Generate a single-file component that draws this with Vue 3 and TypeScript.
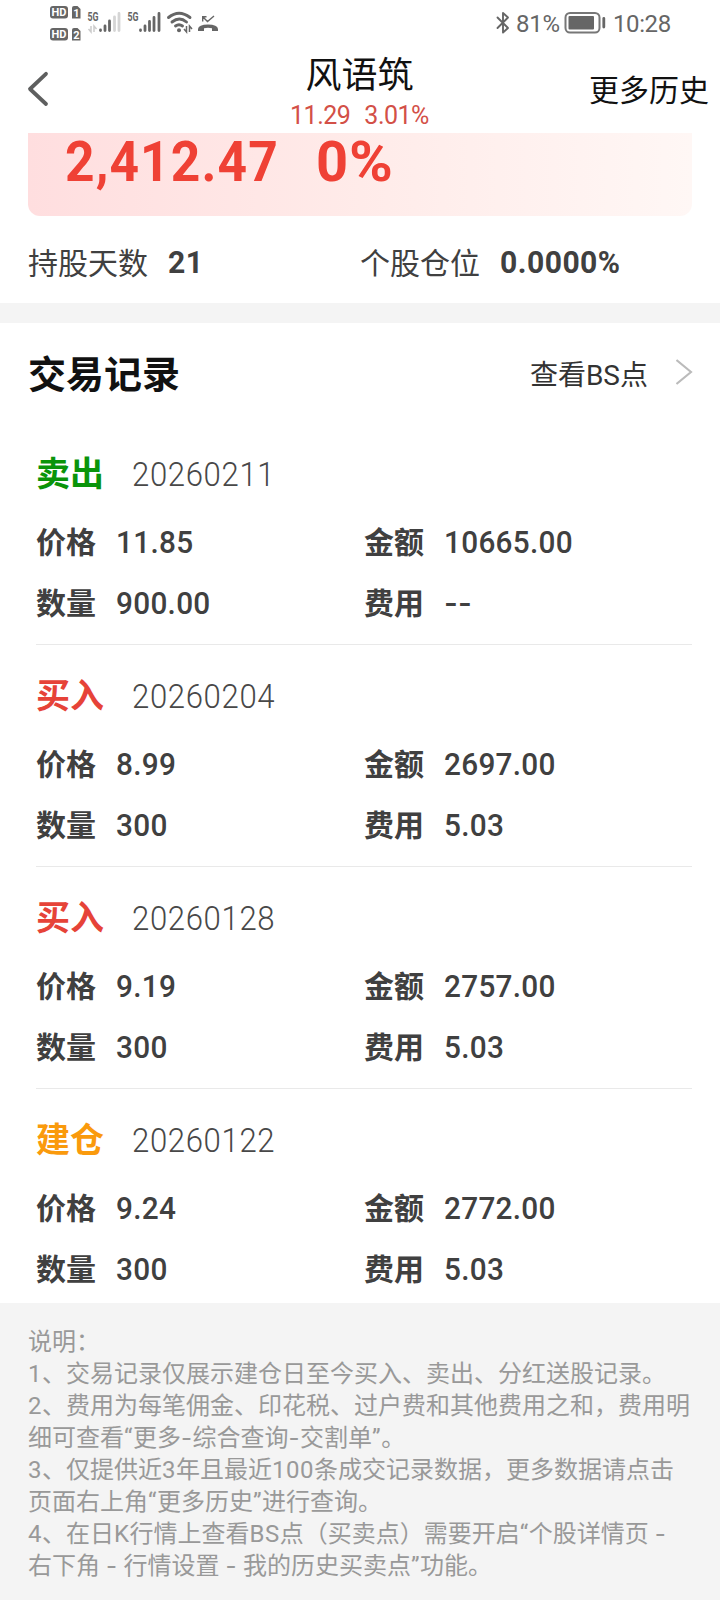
<script setup lang="ts">
interface TradeRecord {
  action: string
  kind: 'sell' | 'buy' | 'open'
  date: string
  price: string
  amount: string
  quantity: string
  fee: string
}

const records: TradeRecord[] = [
  { action: '卖出', kind: 'sell', date: '20260211', price: '11.85', amount: '10665.00', quantity: '900.00', fee: '--' },
  { action: '买入', kind: 'buy', date: '20260204', price: '8.99', amount: '2697.00', quantity: '300', fee: '5.03' },
  { action: '买入', kind: 'buy', date: '20260128', price: '9.19', amount: '2757.00', quantity: '300', fee: '5.03' },
  { action: '建仓', kind: 'open', date: '20260122', price: '9.24', amount: '2772.00', quantity: '300', fee: '5.03' },
]

const notes: string[] = [
  '说明：',
  '1、交易记录仅展示建仓日至今买入、卖出、分红送股记录。',
  '2、费用为每笔佣金、印花税、过户费和其他费用之和，费用明',
  '细可查看“更多-综合查询-交割单”。',
  '3、仅提供近3年且最近100条成交记录数据，更多数据请点击',
  '页面右上角“更多历史”进行查询。',
  '4、在日K行情上查看BS点（买卖点）需要开启“个股详情页 -',
  '右下角 - 行情设置 - 我的历史买卖点”功能。',
]

// Latin runs are tracked out slightly; hyphens are set in a wider face.
const splitRuns = (line: string): string[] => line.split(/(-|[A-Z0-9“”]+)/).filter((p) => p !== '')
const runClass = (part: string) => ({ dash: part === '-', latin: /^[A-Z0-9“”]+$/.test(part) })
</script>

<template>
  <div class="page">
    <div class="status">
      <svg class="status-left" width="190" height="48" viewBox="0 0 190 48">
        <g fill="#666">
          <rect x="10" y="6" width="18" height="12.500" rx="3" />
          <path d="M34 6h3.500l3 3v9.500H32V8a2 2 0 0 1 2-2z" />
          <rect x="10" y="28" width="18" height="12.500" rx="3" />
          <path d="M34 28h3.500l3 3v9.500H32V30a2 2 0 0 1 2-2z" />
        </g>
        <g class="hd" fill="#fff">
          <text x="11.500" y="16.300" textLength="15">HD</text>
          <text x="11.500" y="38.300" textLength="15">HD</text>
          <text x="33.300" y="16.600">1</text>
          <text x="33.300" y="38.600">2</text>
        </g>
        <g transform="translate(10 0)">
          <g class="gen" fill="#666">
            <text x="37.500" y="21" textLength="11" lengthAdjust="spacingAndGlyphs">5G</text>
            <text x="77.500" y="21" textLength="11" lengthAdjust="spacingAndGlyphs">5G</text>
          </g>
          <g stroke-width="2.800" stroke-linecap="round" stroke="#666">
            <path d="M50.500 30v.5M55 26v4.500M59.500 21v9.500M90.500 30v.5M95 26v4.500M99.500 21.500v9M104 17.500v13M109 13.500v17" />
            <path stroke="#d5d5d5" d="M64.500 17v13.500M69 13.500v17" />
          </g>
          <path d="M41 26v6l-2.500-3M44 32v-6l2.500 3" fill="none" stroke="#ccc" stroke-width="1.500" />
          <g fill="none" stroke="#666" stroke-width="2.900" stroke-linecap="round">
            <path d="M118.500 17.500q10.500-8.500 21.500 0M122 22q7.500-6 14.500 0" />
            <path d="M125.500 26q3.500-2.500 7 0" />
          </g>
          <circle cx="129" cy="30.200" r="2" fill="#666" />
          <path d="M136.500 26v6l-2.500-3M139.500 32v-6l2.500 3" fill="none" stroke="#666" stroke-width="1.500" />
        </g>
        <g transform="translate(19 0)">
          <path d="M143.700 16.500v5M143 16.700h4.500M144 17l4.500 4.500 6.500-5.500" fill="none" stroke="#666" stroke-width="1.400" />
          <path d="M149 24.500q9.500 0 10 4.500v2h-6v-2.700q-4-1-8 0v2.700h-6v-2q.5-4.500 10-4.500z" fill="#666" />
        </g>
      </svg>
      <div class="status-right">
        <svg width="15" height="24" viewBox="0 0 15 24" fill="none" stroke="#666" stroke-width="1.900" stroke-linejoin="round" stroke-linecap="round">
          <path d="M2.500 6.500l10.500 10.500-5 4.500V2l5 4.500L2.500 17" />
        </svg>
        <span class="battery-text">81%</span>
        <svg class="battery" width="42" height="22" viewBox="0 0 42 22">
          <rect x="1.500" y="1" width="34" height="19.500" rx="4.500" fill="none" stroke="#777" stroke-width="2" />
          <rect x="4.500" y="4" width="25.500" height="13.500" rx="1" fill="#666" />
          <path d="M39.800 6.500v8.500" stroke="#666" stroke-width="2.800" stroke-linecap="round" />
        </svg>
        <span class="clock">10:28</span>
      </div>
    </div>

    <header class="header">
      <div class="back">
        <svg width="22" height="36" viewBox="0 0 22 36" fill="none" stroke="#5e5f5f" stroke-width="3.800" stroke-linecap="round" stroke-linejoin="round">
          <path d="M19 2.800L3 18l16 15" />
        </svg>
      </div>
      <div class="stock">
        <div class="stock-name">风语筑</div>
        <div class="stock-quote"><span>11.29</span><span>3.01%</span></div>
      </div>
      <div class="more">更多历史</div>
    </header>

    <section class="summary">
      <div class="card"><span class="profit">2,412.47</span><span class="rate">0<span class="percent">%</span></span></div>
      <div class="holding">
        <div class="hold-cell"><span>持股天数</span><b>21</b></div>
        <div class="hold-cell"><span>个股仓位</span><b>0.0000%</b></div>
      </div>
    </section>

    <section class="trades">
      <div class="trades-head">
        <h2>交易记录</h2>
        <div class="bs">
          <span>查看BS点</span>
          <svg width="17" height="28" viewBox="0 0 17 28" fill="none" stroke="#bbb" stroke-width="2.100">
            <path d="M0.500 2l14.500 12L0.500 26" />
          </svg>
        </div>
      </div>
      <article v-for="r in records" :key="r.date" class="record">
        <div class="record-top">
          <span class="action" :class="r.kind">{{ r.action }}</span>
          <span class="date">{{ r.date }}</span>
        </div>
        <div class="pair">
          <div class="field"><span class="label">价格</span><span class="value">{{ r.price }}</span></div>
          <div class="field"><span class="label">金额</span><span class="value">{{ r.amount }}</span></div>
        </div>
        <div class="pair">
          <div class="field"><span class="label">数量</span><span class="value">{{ r.quantity }}</span></div>
          <div class="field"><span class="label">费用</span><span class="value" :class="{ empty: r.fee === '--' }">{{ r.fee }}</span></div>
        </div>
      </article>
    </section>

    <footer class="notes">
      <p v-for="line in notes" :key="line"><span v-for="(part, i) in splitRuns(line)" :key="i" :class="runClass(part)">{{ part }}</span></p>
    </footer>
  </div>
</template>

<style>
body {
  margin: 0;
  background: #fff;
}
</style>

<style scoped>
.page {
  width: 720px;
  height: 1600px;
  overflow: hidden;
  display: flex;
  flex-direction: column;
  background: #fff;
  font-family: Roboto, "Noto Sans CJK SC", sans-serif;
  color: #404040;
}
.status {
  height: 48px;
  display: flex;
  justify-content: space-between;
  padding: 0 49px 0 40px;
  flex: none;
}
.hd {
  font: 700 11px Roboto, sans-serif;
}
.gen {
  font: 700 12px Roboto, sans-serif;
}
.status-right {
  display: flex;
  align-items: center;
  height: 46px;
  font-size: 24px;
  color: #666;
}
.battery-text {
  margin-left: 6px;
  width: 48px;
  letter-spacing: -0.300px;
}
.battery {
  width: 42px;
}
.clock {
  margin-left: 7px;
  width: 58px;
  letter-spacing: -0.400px;
}
.battery-text,
.clock {
  padding-top: 1px;
}
.header {
  height: 85px;
  flex: none;
  display: grid;
  grid-template-columns: 200px 1fr 200px;
  padding: 0 11px 0 27px;
}
.back {
  padding-top: 23px;
}
.back svg {
  display: block;
}
.stock {
  text-align: center;
  padding: 3px 17px 0 0;
  margin: 0 -10px;
}
.stock-name {
  font-size: 36px;
  line-height: 50px;
  color: #111;
}
.stock-quote {
  display: flex;
  justify-content: center;
  gap: 14px;
  font-size: 25px;
  line-height: 30px;
  letter-spacing: -0.500px;
  color: #d35047;
}
.more {
  font-size: 30px;
  line-height: 85px;
  text-align: right;
  color: #111;
  white-space: nowrap;
}
.summary {
  height: 170px;
  flex: none;
  border-bottom: 20px solid #f4f4f4;
  padding: 0 28px;
}
.card {
  height: 83px;
  box-sizing: border-box;
  border-radius: 0 0 12px 12px;
  background: linear-gradient(90deg, #ffdedf, #ffebe9 50%, #fff7f5);
  display: flex;
  padding-left: 37px;
  font-size: 56px;
  font-weight: 700;
  line-height: 59px;
  color: #ef4135;
}
.profit {
  width: 251px;
  letter-spacing: 1.200px;
  transform: scaleX(0.92);
  transform-origin: left;
}
.rate {
  letter-spacing: 1px;
}
.percent {
  display: inline-block;
  transform: scaleX(1.060);
  transform-origin: left;
}
.holding {
  display: grid;
  grid-template-columns: 332px 1fr;
  height: 92px;
}
.hold-cell {
  display: flex;
  align-items: center;
  gap: 20px;
  font-size: 30px;
}
.hold-cell span {
  padding-bottom: 3px;
}
.hold-cell b {
  padding-bottom: 1px;
  font-size: 32px;
  letter-spacing: 0.500px;
  transform: scaleX(0.94);
  transform-origin: left;
}
.trades {
  height: 980px;
  flex: none;
}
.trades-head {
  height: 112px;
  padding: 0 27px 0 28px;
  display: flex;
  justify-content: space-between;
}
h2 {
  margin: 0;
  font-size: 38px;
  line-height: 104px;
  color: #111;
}
.bs {
  display: flex;
  align-items: center;
  gap: 28px;
  height: 98px;
  font-size: 28px;
  color: #333;
}
.bs span {
  padding-top: 2px;
}
.record {
  height: 222px;
  box-sizing: border-box;
  margin: 0 28px 0 36px;
  border-bottom: 1px solid #e9e9e9;
}
.record:first-of-type {
  height: 210px;
}
.record:not(:first-of-type) {
  padding-top: 12px;
}
.record:last-child {
  border-bottom: 0;
}
.record-top {
  display: flex;
  align-items: center;
  height: 76px;
}
.action {
  width: 96px;
  padding-bottom: 4px;
  font-size: 34px;
  font-weight: 700;
}
.sell {
  color: #0a940a;
}
.buy {
  color: #e64338;
}
.open {
  color: #fa9a0c;
}
.date {
  padding-top: 1px;
  font-size: 34px;
  font-weight: 300;
  letter-spacing: 0.700px;
  color: #484848;
  transform: scaleX(0.915);
  transform-origin: left;
}
.pair {
  display: grid;
  grid-template-columns: 328px 1fr;
  height: 61px;
}
.field {
  display: flex;
  align-items: center;
}
.label {
  width: 80px;
  padding-bottom: 4px;
  font-size: 30px;
  font-weight: 700;
}
.value {
  font-size: 32px;
  font-weight: 500;
  letter-spacing: 0.300px;
  transform: scaleX(0.93);
  transform-origin: left;
}
.empty {
  font-family: Inter, sans-serif;
}
.notes {
  flex: 1;
  padding: 23px 28px 0;
  background: #f4f4f4;
  color: #999;
}
.notes p {
  margin: 0;
  font-size: 24px;
  line-height: 32px;
  height: 32px;
  white-space: pre;
}
.latin {
  letter-spacing: 0.500px;
}
.dash {
  font-family: Inter, sans-serif;
  letter-spacing: 0.500px;
}
</style>
